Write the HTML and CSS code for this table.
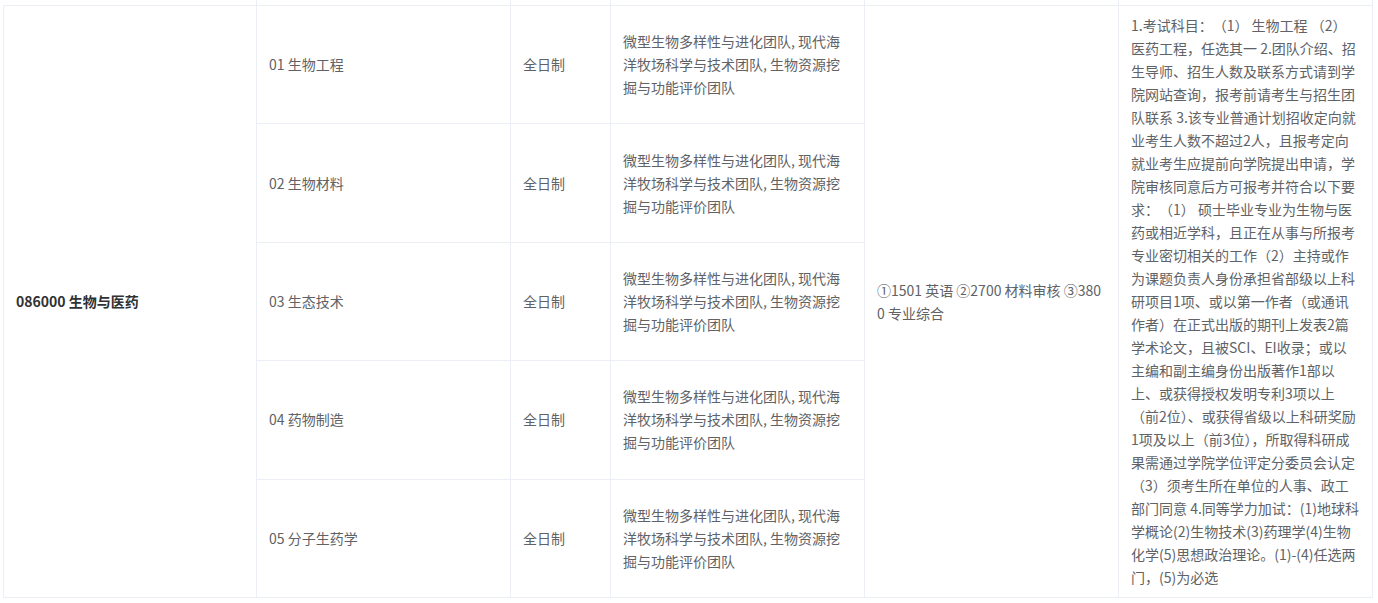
FILE: index.html
```html
<!DOCTYPE html>
<html lang="zh-CN">
<head>
<meta charset="utf-8">
<title>专业目录</title>
<link rel="stylesheet" href="styles.css">
</head>
<body>
<div class="wrap">
<table class="plan">
  <colgroup>
    <col class="c-major">
    <col class="c-dir">
    <col class="c-mode">
    <col class="c-team">
    <col class="c-exam">
    <col class="c-note">
  </colgroup>
  <tbody>
    <tr class="pre">
      <td class="first"></td><td></td><td></td><td></td><td></td><td></td>
    </tr>
    <tr>
      <td class="major first" rowspan="5">086000 生物与医药</td>
      <td>01 生物工程</td>
      <td>全日制</td>
      <td>微型生物多样性与进化团队, 现代海洋牧场科学与技术团队, 生物资源挖掘与功能评价团队</td>
      <td rowspan="5">①1501 英语 ②2700 材料审核 ③3800 专业综合</td>
      <td class="note" rowspan="5">1.考试科目：（1） 生物工程 （2）医药工程，任选其一 2.团队介绍、招生导师、招生人数及联系方式请到学院网站查询，报考前请考生与招生团队联系 3.该专业普通计划招收定向就业考生人数不超过2人，且报考定向就业考生应提前向学院提出申请，学院审核同意后方可报考并符合以下要求：（1） 硕士毕业专业为生物与医药或相近学科，且正在从事与所报考专业密切相关的工作（2）主持或作为课题负责人身份承担省部级以上科研项目1项、或以第一作者（或通讯作者）在正式出版的期刊上发表2篇学术论文，且被SCI、EI收录；或以主编和副主编身份出版著作1部以上、或获得授权发明专利3项以上（前2位<span class="half">）</span>、或获得省级以上科研奖励1项及以上（前3位<span class="half">）</span>，所取得科研成果需通过学院学位评定分委员会认定（3）须考生所在单位的人事、政工部门同意 4.同等学力加试：(1)地球科学概论(2)生物技术(3)药理学(4)生物化学(5)思想政治理论。(1)-(4)任选两门，(5)为必选</td>
    </tr>
    <tr>
      <td>02 生物材料</td>
      <td>全日制</td>
      <td>微型生物多样性与进化团队, 现代海洋牧场科学与技术团队, 生物资源挖掘与功能评价团队</td>
    </tr>
    <tr>
      <td>03 生态技术</td>
      <td>全日制</td>
      <td>微型生物多样性与进化团队, 现代海洋牧场科学与技术团队, 生物资源挖掘与功能评价团队</td>
    </tr>
    <tr>
      <td>04 药物制造</td>
      <td>全日制</td>
      <td>微型生物多样性与进化团队, 现代海洋牧场科学与技术团队, 生物资源挖掘与功能评价团队</td>
    </tr>
    <tr>
      <td>05 分子生药学</td>
      <td>全日制</td>
      <td>微型生物多样性与进化团队, 现代海洋牧场科学与技术团队, 生物资源挖掘与功能评价团队</td>
    </tr>
  </tbody>
</table>
</div>
</body>
</html>
```

FILE: styles.css
```css
html, body {
  margin: 0;
  padding: 0;
  background: #ffffff;
}

.wrap {
  padding-left: 3px;
}

.plan {
  width: 1370px;
  table-layout: fixed;
  border-collapse: separate;
  border-spacing: 0;
  font-family: "Noto Sans CJK SC", "Noto Sans", sans-serif;
  font-size: 14px;
  line-height: 23px;
  color: #606266;
  text-spacing-trim: space-all;
}

.c-major { width: 254px; }
.c-dir { width: 254px; }
.c-mode { width: 100px; }
.c-team { width: 254px; }
.c-exam { width: 254px; }
.c-note { width: 254px; }

.plan td {
  box-sizing: border-box;
  padding: 8px 12px;
  border-right: 1px solid #ebeef5;
  border-bottom: 1px solid #ebeef5;
  vertical-align: middle;
  word-break: break-all;
  text-align: left;
  text-spacing-trim: space-all;
}

.plan td.first {
  border-left: 1px solid #ebeef5;
}

.plan .pre td {
  padding: 0;
  height: 6px;
  font-size: 0;
  line-height: 0;
}

.plan .pre td.first {
  border-left-color: transparent;
}

.plan td.major {
  font-weight: 700;
  color: #303133;
}

.note .half {
  font-feature-settings: "halt" 1;
}
```
